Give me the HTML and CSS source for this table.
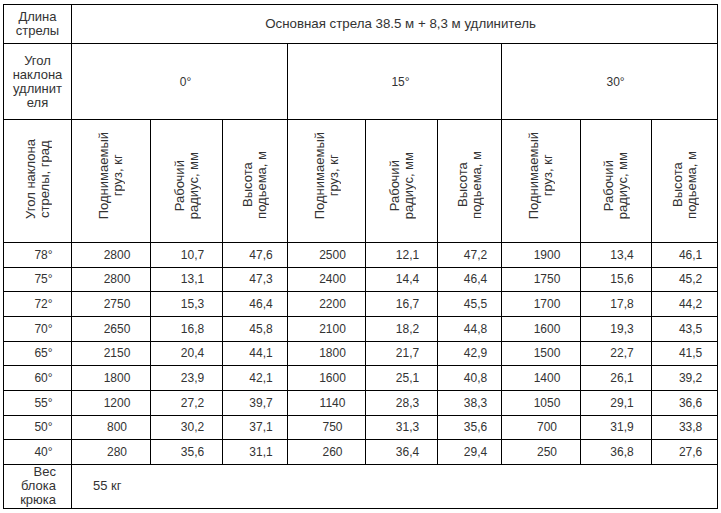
FILE: index.html
```html
<!DOCTYPE html>
<html lang="ru">
<head>
<meta charset="utf-8">
<title>Таблица грузоподъемности</title>
<link rel="stylesheet" href="styles.css">
</head>
<body>
<table class="load">
  <colgroup>
    <col class="c1"><col class="c2"><col class="c3"><col class="c4"><col class="c5"><col class="c6"><col class="c7"><col class="c8"><col class="c9"><col class="c10">
  </colgroup>
  <tr class="r-title">
    <td class="side txt">Длина стрелы</td>
    <td colspan="9" class="txt title">Основная стрела 38.5 м + 8,3 м удлинитель</td>
  </tr>
  <tr class="r-angle">
    <td class="side side-break txt">Угол наклона удлинителя</td>
    <td colspan="3">0°</td>
    <td colspan="3">15°</td>
    <td colspan="3">30°</td>
  </tr>
  <tr class="r-vert">
    <td class="vh"><span class="vt">Угол наклона<br>стрелы, град</span></td>
    <td class="vh"><span class="vt">Поднимаемый<br>груз, кг</span></td>
    <td class="vh"><span class="vt">Рабочий<br>радиус, мм</span></td>
    <td class="vh"><span class="vt">Высота<br>подьема, м</span></td>
    <td class="vh"><span class="vt">Поднимаемый<br>груз, кг</span></td>
    <td class="vh"><span class="vt">Рабочий<br>радиус, мм</span></td>
    <td class="vh"><span class="vt">Высота<br>подьема, м</span></td>
    <td class="vh"><span class="vt">Поднимаемый<br>груз, кг</span></td>
    <td class="vh"><span class="vt">Рабочий<br>радиус, мм</span></td>
    <td class="vh"><span class="vt">Высота<br>подьема, м</span></td>
  </tr>
  <tr class="r-data"><td>78°</td><td>2800</td><td>10,7</td><td>47,6</td><td>2500</td><td>12,1</td><td>47,2</td><td>1900</td><td>13,4</td><td>46,1</td></tr>
  <tr class="r-data"><td>75°</td><td>2800</td><td>13,1</td><td>47,3</td><td>2400</td><td>14,4</td><td>46,4</td><td>1750</td><td>15,6</td><td>45,2</td></tr>
  <tr class="r-data"><td>72°</td><td>2750</td><td>15,3</td><td>46,4</td><td>2200</td><td>16,7</td><td>45,5</td><td>1700</td><td>17,8</td><td>44,2</td></tr>
  <tr class="r-data"><td>70°</td><td>2650</td><td>16,8</td><td>45,8</td><td>2100</td><td>18,2</td><td>44,8</td><td>1600</td><td>19,3</td><td>43,5</td></tr>
  <tr class="r-data"><td>65°</td><td>2150</td><td>20,4</td><td>44,1</td><td>1800</td><td>21,7</td><td>42,9</td><td>1500</td><td>22,7</td><td>41,5</td></tr>
  <tr class="r-data"><td>60°</td><td>1800</td><td>23,9</td><td>42,1</td><td>1600</td><td>25,1</td><td>40,8</td><td>1400</td><td>26,1</td><td>39,2</td></tr>
  <tr class="r-data"><td>55°</td><td>1200</td><td>27,2</td><td>39,7</td><td>1140</td><td>28,3</td><td>38,3</td><td>1050</td><td>29,1</td><td>36,6</td></tr>
  <tr class="r-data"><td>50°</td><td>800</td><td>30,2</td><td>37,1</td><td>750</td><td>31,3</td><td>35,6</td><td>700</td><td>31,9</td><td>33,8</td></tr>
  <tr class="r-data"><td>40°</td><td>280</td><td>35,6</td><td>31,1</td><td>260</td><td>36,4</td><td>29,4</td><td>250</td><td>36,8</td><td>27,6</td></tr>
  <tr class="r-hook">
    <td class="hook-label txt">Вес блока крюка</td>
    <td colspan="9" class="hook-value txt">55 кг</td>
  </tr>
</table>
</body>
</html>
```

FILE: styles.css
```css
html, body {
  background: #ffffff;
}

body {
  margin: 4px 0 0 3px;
  font-family: "Liberation Sans", Arial, sans-serif;
  font-size: 12px;
  color: #333333;
}

.load {
  border-collapse: collapse;
  table-layout: fixed;
  width: 714px;
}

.load td {
  border: 1px solid #000000;
  text-align: center;
  vertical-align: middle;
  padding: 0 0 0 12px;
}

.load td.txt {
  font-size: 13px;
  line-height: 14px;
}

.load td.title {
  font-size: 13.3px;
}

.c1 { width: 68px; }
.c2 { width: 79px; }
.c3 { width: 72px; }
.c4 { width: 65px; }
.c5 { width: 78px; }
.c6 { width: 72px; }
.c7 { width: 64px; }
.c8 { width: 79px; }
.c9 { width: 71px; }
.c10 { width: 66px; }

.r-title { height: 39px; }
.r-angle { height: 76px; }
.r-vert { height: 123px; }
.r-data { height: 24.67px; }
.r-hook { height: 44px; }

.load td.side {
  padding: 0 8px;
}

.side-break {
  overflow-wrap: anywhere;
}

.load td.vh {
  vertical-align: bottom;
  padding: 0 0 20px 0;
}

.vt {
  display: inline-block;
  writing-mode: vertical-rl;
  transform: rotate(180deg);
  text-align: center;
  font-size: 13px;
  line-height: 14px;
}

.load td.hook-label {
  text-align: right;
  padding: 0 15px 0 0;
}

.load td.hook-value {
  text-align: left;
  padding: 0 0 0 21px;
}
```
